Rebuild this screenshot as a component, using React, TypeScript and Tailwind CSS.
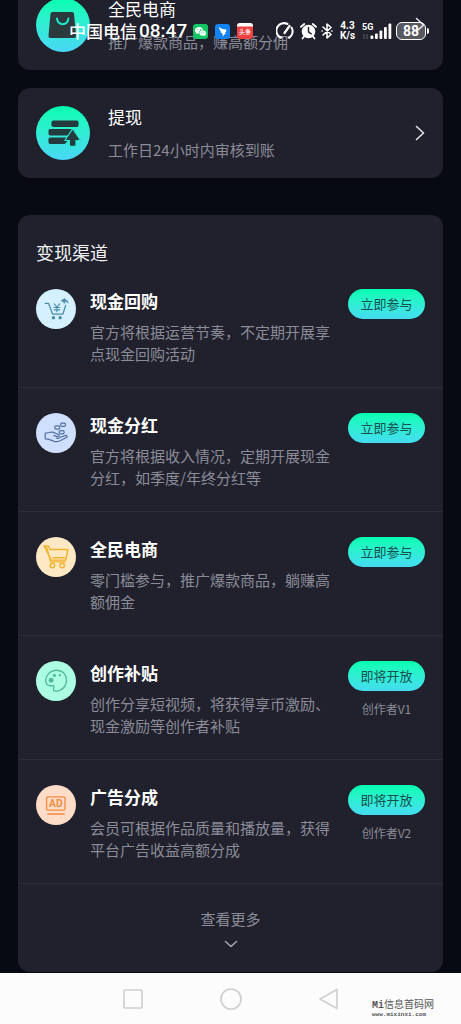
import type { ReactNode } from "react";

function BagIcon() {
  return (
    <svg viewBox="0 0 54 54" className="h-[54px] w-[54px]" aria-hidden="true">
      <path d="M16.500 14h19.500a2 2 0 0 1 2 1.800l2 22a2 2 0 0 1-2 2.200H14.500a2 2 0 0 1-2-2.200l2-22A2 2 0 0 1 16.500 14Z" fill="#2b3a3d" />
      <path d="M21 20.500a5.700 5.700 0 0 0 11.400 0" fill="none" stroke="#19ecc6" strokeWidth="2" strokeLinecap="round" />
    </svg>
  );
}

function WithdrawIcon() {
  return (
    <svg viewBox="0 0 54 54" className="h-[54px] w-[54px]" aria-hidden="true">
      <g fill="#243b3e">
        <rect x="15.500" y="14.500" width="27" height="6.500" rx="1.800" />
        <rect x="12.500" y="23" width="26" height="6.500" rx="1.800" />
        <rect x="12.500" y="31.500" width="22" height="6.500" rx="1.800" />
      </g>
      <path d="M36.700 21.500 45.500 35H41v6h-8.600v-3h-3.500l2.500-3h-3.500Z" fill="#27e8d4" />
      <path d="M36.700 24.500 42.800 33.500h-3.900v5.700h-4.400v-5.700h-3.900Z" fill="#243b3e" stroke="#243b3e" strokeLinejoin="round" />
    </svg>
  );
}

function BuybackIcon() {
  return (
    <svg viewBox="0 0 39 39" className="h-full w-full" fill="none" stroke="#4b8ea8" strokeWidth="1.300" strokeLinecap="round" strokeLinejoin="round" aria-hidden="true">
      <path d="M9 14h3.200l4 10.500h10l2.700-8.500" />
      <path d="m17.700 14.500 2.700 3.200 2.700-3.200M20.400 17.700v4.600M17.600 18h5.600M17.600 20.300h5.600" strokeWidth="1.100" />
      <circle cx="17" cy="28" r="1" fill="#4b8ea8" />
      <circle cx="23.500" cy="28" r="1" fill="#4b8ea8" />
      <path d="m24.500 11.300 3.800-2.300v1.400c2.200 0 3.300 1.300 2.900 3.600-.7-1.300-1.500-1.700-2.900-1.700v1.500Z" fill="#4b8ea8" strokeWidth=".4" />
    </svg>
  );
}

function DividendIcon() {
  return (
    <svg viewBox="0 0 39 39" className="h-full w-full" fill="none" stroke="#53719f" strokeWidth="1.200" strokeLinecap="round" strokeLinejoin="round" aria-hidden="true">
      <path d="M9 19.700c3.500-.2 5-1.700 7.300-1l5.500 2.300c1.600.8.600 2.400-.8 2.100l-3.600-1M9 19.700v5.500c3.800-.1 5 .8 8.200 2.300 2.500 1 4 .7 6.300-.4l6.200-3.200c1.400-.9.300-2.500-1.400-1.900l-4.500 1.600c-.8 1.300-2.200 1.300-3.800.9" />
      <rect x="18.300" y="12.600" width="4.800" height="3.200" rx="1.300" />
      <rect x="24" y="9.800" width="4.800" height="3.200" rx="1.300" />
      <rect x="22.600" y="17.200" width="4.800" height="3.200" rx="1.300" />
    </svg>
  );
}

function ShopCartIcon() {
  return (
    <svg viewBox="0 0 39 39" className="h-full w-full" fill="none" stroke="#efb32e" strokeWidth="1.300" strokeLinecap="round" strokeLinejoin="round" aria-hidden="true">
      <path d="M8 8.800h3.200c.9 0 1.200.4 1.400 1l.7 2.400h17.700l-1.900 10.300H14.800Z" />
      <path d="M8 8.800c0 1.800 2.300 1.300 2.800 2.500l3.400 13h14.400M16.500 20.200h11.500" />
      <circle cx="16" cy="27.800" r="2.200" />
      <circle cx="25.500" cy="27.800" r="2.200" />
    </svg>
  );
}

function PaletteIcon() {
  return (
    <svg viewBox="0 0 39 39" className="h-full w-full" fill="none" stroke="#54b89a" strokeWidth="1.300" strokeLinecap="round" strokeLinejoin="round" aria-hidden="true">
      <path d="M9.600 20.700c-.8-6.700 4.600-11.700 10.500-11.700 5.800 0 9.700 4.300 9.700 9.500 0 5.900-4.300 10.800-10.200 10.800-2.300 0-3.200-1.100-2.400-2.900.8-1.600.2-2.500-1.700-2.300-3 .3-5.400-.5-5.900-3.400Z" />
      <g fill="#54b89a" stroke="none">
        <circle cx="14.700" cy="18.800" r="2.400" />
        <circle cx="18" cy="14" r="1.500" />
        <circle cx="23.300" cy="13.800" r="1.100" />
      </g>
    </svg>
  );
}

function AdIcon() {
  return (
    <svg viewBox="0 0 39 39" className="h-full w-full" fill="none" stroke="#ee8c41" strokeWidth="1.300" strokeLinecap="round" aria-hidden="true">
      <rect x="10.300" y="11.500" width="18" height="13" rx="1.500" />
      <path d="M11.500 28.300h16" />
      <text x="19.300" y="21.600" textAnchor="middle" fill="#ee8c41" stroke="none" fontFamily="Roboto, sans-serif" fontWeight="700" fontSize="10">AD</text>
    </svg>
  );
}

function Chevron({ className }: { className: string }) {
  return (
    <svg viewBox="0 0 10 16" className={className} fill="none" stroke="currentColor" strokeWidth="1.600" strokeLinecap="round" strokeLinejoin="round" aria-hidden="true">
      <path d="m1.500 1.500 7 6.500-7 6.500" />
    </svg>
  );
}

function StatusBar() {
  return (
    <div className="absolute inset-x-0 top-0 flex h-[62px] items-center justify-between pr-[32px] pl-[69px] text-white">
      <div className="flex items-center">
        <span className="text-[17px] font-medium">中国电信</span>
        <span className="ml-0.5 font-[Roboto,sans-serif] text-[19px] font-medium">08:47</span>
        <div className="flex items-center gap-[7px] pl-1.5">
          <svg viewBox="0 0 15 15" className="h-[15px] w-[15px]" aria-hidden="true">
            <rect width="15" height="15" rx="3" fill="#10c564" />
            <path d="M6.200 3C3.800 3 2 4.500 2 6.400c0 1 .5 1.900 1.400 2.500L3 10.200l1.600-.8 1.200.2C5.600 7.200 7.400 5.700 10 5.800 9.600 4.200 8.100 3 6.200 3Z" fill="#fff" />
            <path d="M9.700 6.300c2 0 3.500 1.300 3.500 2.900 0 .9-.4 1.600-1.100 2.100l.3 1.100-1.300-.7c-2.800.6-4.800-.7-4.800-2.500 0-1.600 1.500-2.900 3.400-2.900Z" fill="#e9fbf1" />
            <g fill="#10c564"><circle cx="4.800" cy="5.500" r=".5" /><circle cx="7.500" cy="5.500" r=".5" /><circle cx="8.600" cy="8.400" r=".4" /><circle cx="10.900" cy="8.400" r=".4" /></g>
          </svg>
          <svg viewBox="0 0 15 15" className="h-[15px] w-[15px]" aria-hidden="true">
            <rect width="15" height="15" rx="3" fill="#1183f4" />
            <path d="M3.800 3c2.500 1.800 5 2.400 7.500 2.600.3 1.500-.4 2.500-1.500 3.400l1.200.1-3.700 3.700.7-2.500-1.300-.1.700-.9c-1-.2-1.700-.7-2-1.500l1 .1C5 6.800 4.200 5 3.800 3Z" fill="#fff" />
          </svg>
          <svg viewBox="0 0 16 16" className="h-[16px] w-[16px]" aria-hidden="true">
            <rect width="16" height="16" rx="3" fill="#f04142" />
            <path d="M0 3.500V3a3 3 0 0 1 3-3h10a3 3 0 0 1 3 3v.5Z" fill="#fff" />
            <text x="8" y="10.800" textAnchor="middle" fill="#fff" fontSize="6" fontWeight="500">头条</text>
          </svg>
        </div>
      </div>
      <div className="flex items-center">
        <svg viewBox="0 0 18 18" className="h-[18px] w-[18px]" fill="none" stroke="#fff" strokeWidth="2" strokeLinecap="round" aria-hidden="true">
          <path d="M4.500 15.500A7.500 7.500 0 0 1 11.500 2M15.500 5.500a7.500 7.500 0 0 1-2 10" />
          <path d="m8.500 11 5-7" strokeWidth="2.200" />
          <path d="M4.500 15.500h1M13.500 15.500h-1" />
        </svg>
        <svg viewBox="0 0 17 18" className="ml-1.5 h-[18px] w-[17px]" aria-hidden="true">
          <circle cx="8.500" cy="9.500" r="6.800" fill="#fff" />
          <path d="M1 4.800 4.300 2M16 4.800 12.700 2M4 14.500l-1.500 2M13 14.500l1.500 2" stroke="#fff" strokeWidth="1.800" strokeLinecap="round" />
          <path d="M8.500 5.500v4.300l2.700 2" fill="none" stroke="#252630" strokeWidth="1.500" strokeLinecap="round" />
        </svg>
        <svg viewBox="0 0 12 18" className="ml-1 h-[18px] w-[12px]" fill="none" stroke="#fff" strokeWidth="1.600" strokeLinejoin="round" strokeLinecap="round" aria-hidden="true">
          <path d="m2 5 8 7.500L6 16V2l4 3.500L2 13" />
          <path d="M1 9h.2M10.800 9h.2" />
        </svg>
        <div className="ml-1.5 w-[17px] text-center font-[Roboto,sans-serif] text-[10px] leading-[10px] font-bold">
          <div>4.3</div>
          <div>K/s</div>
        </div>
        <svg viewBox="0 0 30 20" className="ml-1.5 h-[20px] w-[30px]" aria-hidden="true">
          <text x="0" y="8.500" fill="#fff" fontFamily="Roboto, sans-serif" fontSize="9" fontWeight="700">5G</text>
          <path d="M2 18v-5M5 13v5" stroke="#555660" strokeWidth="1.200" />
          <g fill="#fff">
            <rect x="8.500" y="14.500" width="2.800" height="3.500" rx="1" />
            <rect x="13" y="12.500" width="2.800" height="5.500" rx="1" />
            <rect x="17.500" y="9.500" width="2.800" height="8.500" rx="1" />
            <rect x="22" y="6" width="2.800" height="12" rx="1" />
            <rect x="26.500" y="2.500" width="2.800" height="15.500" rx="1" />
          </g>
        </svg>
        <div className="ml-1 flex h-[18px] w-[30px] items-center justify-center rounded-md border border-white bg-white/25 font-[Roboto,sans-serif] text-[14px] leading-none font-bold">88</div>
        <div className="ml-px h-1.5 w-0.5 rounded-r bg-white" />
      </div>
    </div>
  );
}

function EntryCard({ icon, title, text }: { icon: ReactNode; title: string; text: string }) {
  return (
    <a href="#" className="flex h-[90px] items-center rounded-xl bg-[#20212d] px-[18px]">
      <span className="shrink-0 rounded-full bg-linear-to-b from-[#00ffae] to-[#48d7f5]">{icon}</span>
      <span className="ml-[18px] flex flex-1 flex-col gap-2.5">
        <span className="text-[17px] leading-6 text-white">{title}</span>
        <span className="text-[15px] leading-[22px] text-[#8b8c97]">{text}</span>
      </span>
      <Chevron className="h-[16px] w-[10px] text-[#e4e4e8]" />
    </a>
  );
}

type Channel = { title: string; text: string; action: string; level?: string; tint: string; icon: ReactNode };

const channels: Channel[] = [
  { title: "现金回购", text: "官方将根据运营节奏，不定期开展享点现金回购活动", action: "立即参与", tint: "bg-[#d5f1ff]", icon: <BuybackIcon /> },
  { title: "现金分红", text: "官方将根据收入情况，定期开展现金分红，如季度/年终分红等", action: "立即参与", tint: "bg-[#cfdfff]", icon: <DividendIcon /> },
  { title: "全民电商", text: "零门槛参与，推广爆款商品，躺赚高额佣金", action: "立即参与", tint: "bg-[#ffe9c5]", icon: <ShopCartIcon /> },
  { title: "创作补贴", text: "创作分享短视频，将获得享币激励、现金激励等创作者补贴", action: "即将开放", level: "创作者V1", tint: "bg-[#acffe2]", icon: <PaletteIcon /> },
  { title: "广告分成", text: "会员可根据作品质量和播放量，获得平台广告收益高额分成", action: "即将开放", level: "创作者V2", tint: "bg-[#ffdcc8]", icon: <AdIcon /> },
];

function ChannelRow({ channel }: { channel: Channel }) {
  return (
    <li className="flex items-start border-b border-[#2b2c38] px-[18px] pt-[25px] pb-[22px]">
      <span className={`h-[40px] w-[40px] shrink-0 rounded-full ${channel.tint}`}>{channel.icon}</span>
      <div className="ml-3.5 flex-1">
        <h3 className="text-[17px] leading-6 font-bold text-white">{channel.title}</h3>
        <p className="mt-2 text-[15px] leading-[22px] text-[#8b8c97]">{channel.text}</p>
      </div>
      <div className="ml-4 flex flex-col items-center">
        <button type="button" className="h-[30px] w-[77px] rounded-full bg-linear-to-b from-[#00ffb0] to-[#44dcf1] text-[13px] text-[#17514f]">{channel.action}</button>
        {channel.level && <span className="mt-2.5 text-[12px] leading-4 text-[#8b8c97]">{channel.level}</span>}
      </div>
    </li>
  );
}

function NavigationBar() {
  return (
    <nav className="relative mt-auto flex h-[51px] items-center justify-center bg-[#fcfcfc] text-[#d0d0d0]">
      <button type="button" aria-label="最近任务" className="flex w-[98px] justify-center">
        <svg viewBox="0 0 22 22" className="h-[22px] w-[22px]" fill="none" stroke="currentColor" strokeWidth="1.700"><rect x="2" y="2" width="18" height="18" rx="1" /></svg>
      </button>
      <button type="button" aria-label="主页" className="flex w-[98px] justify-center">
        <svg viewBox="0 0 22 22" className="h-[22px] w-[22px]" fill="none" stroke="currentColor" strokeWidth="1.700"><circle cx="11" cy="11" r="10" /></svg>
      </button>
      <button type="button" aria-label="返回" className="flex w-[98px] justify-center">
        <svg viewBox="0 0 22 22" className="h-[22px] w-[22px]" fill="none" stroke="currentColor" strokeWidth="1.700" strokeLinejoin="round"><path d="M19 1.500v19L2 11Z" /></svg>
      </button>
      <div className="absolute right-[27px] bottom-1.5 text-[#555]">
        <div className="text-[10px] leading-[12px]"><span className="font-['Liberation_Mono',monospace] font-bold">Mi</span>信息首码网</div>
        <div className="font-['Liberation_Mono',monospace] text-[6px] leading-[6px] font-bold">www.mixinxi.com</div>
      </div>
    </nav>
  );
}

export default function App() {
  return (
    <div className="relative flex min-h-screen flex-col overflow-hidden bg-[#070a12] font-['Noto_Sans_CJK_SC',sans-serif]">
      <main className="-mt-5 px-[18px]">
        <div className="flex flex-col gap-[18px]">
          <EntryCard icon={<BagIcon />} title="全民电商" text="推广爆款商品，赚高额分佣" />
          <EntryCard icon={<WithdrawIcon />} title="提现" text="工作日24小时内审核到账" />
        </div>
        <section className="mt-[37px] rounded-xl bg-[#20212d]">
          <h2 className="px-[18px] pt-[25px] text-[18px] leading-6 text-[#f1f1f4]">变现渠道</h2>
          <ul>
            {channels.map((channel) => (
              <ChannelRow key={channel.title} channel={channel} />
            ))}
          </ul>
          <button type="button" className="flex w-full flex-col items-center gap-2 pt-6 pb-[22px] text-[15px] leading-[22px] text-[#8b8c97]">
            查看更多
            <svg viewBox="0 0 14 12" className="h-[12px] w-[14px]" fill="none" stroke="#a3a4ae" strokeWidth="1.600" strokeLinecap="round" strokeLinejoin="round" aria-hidden="true"><path d="m1.500 3.500 5.500 5 5.500-5" /></svg>
          </button>
        </section>
      </main>
      <StatusBar />
      <NavigationBar />
    </div>
  );
}
